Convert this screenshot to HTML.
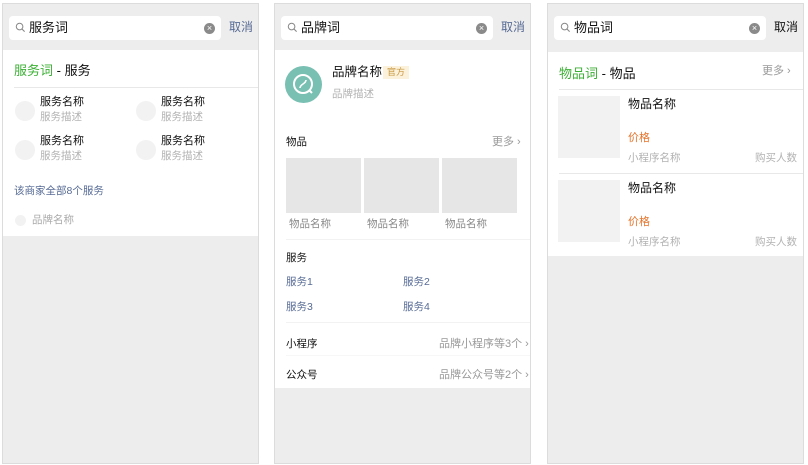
<!DOCTYPE html>
<html><head><meta charset="utf-8"><style>
*{margin:0;padding:0;box-sizing:border-box}
body{width:808px;height:465px;background:#fff;position:relative;font-family:"Liberation Sans","Noto Sans CJK SC",sans-serif;overflow:hidden;line-height:1}
.p{position:absolute;top:3px;width:257px;height:461px;background:#ededed;border:1px solid #dcdcdc}
.a{position:absolute;white-space:nowrap}
.sb{position:absolute;left:6px;top:12px;width:212px;height:24px;background:#fff;border-radius:4px}
.sb .t{position:absolute;left:20px;top:5px;font-size:13px;color:#111}
.x{position:absolute;right:6px;top:7px;width:11px;height:11px;border-radius:50%;background:#8a8a8a;color:#fff;font-size:9px;line-height:11px;text-align:center}
.c{position:absolute;left:226px;top:17px;font-size:12px;color:#576b95}
.w{position:absolute;left:0;width:255px;background:#fff}
.f13{font-size:13px;color:#111}
.f12{font-size:11px;color:#111}
.g{font-size:10.5px;color:#b2b2b2}
.ln{position:absolute;height:1px;background:#e8e8e8}
.circ{position:absolute;width:20px;height:20px;border-radius:50%;background:#f2f2f2}
.img{position:absolute;background:#e6e6e6}
.arr{font-size:11px;color:#999}
</style></head><body>
<svg width="0" height="0" style="position:absolute"><defs><symbol id="s" viewBox="0 0 12 12"><circle cx="5" cy="5" r="3.6" fill="none" stroke="#888" stroke-width="1.1"/><line x1="7.6" y1="7.6" x2="10.5" y2="10.5" stroke="#888" stroke-width="1.2"/></symbol></defs></svg>

<div class="p" style="left:2px">
 <div class="sb"><svg class="a" style="left:6px;top:6px" width="11" height="11"><use href="#s"/></svg><span class="t">服务词</span><span class="x">×</span></div>
 <span class="c">取消</span>
 <div class="w" style="top:46px;height:186px">
  <span class="a f13" style="left:11px;top:14px"><span style="color:#3cb035">服务词</span> - 服务</span>
  <div class="ln" style="left:11px;right:0;top:37px"></div>
  <div class="circ" style="left:12px;top:51px"></div><span class="a f12" style="left:37px;top:47px">服务名称</span><span class="a g" style="left:37px;top:62px">服务描述</span>
  <div class="circ" style="left:133px;top:51px"></div><span class="a f12" style="left:158px;top:47px">服务名称</span><span class="a g" style="left:158px;top:62px">服务描述</span>
  <div class="circ" style="left:12px;top:90px"></div><span class="a f12" style="left:37px;top:86px">服务名称</span><span class="a g" style="left:37px;top:101px">服务描述</span>
  <div class="circ" style="left:133px;top:90px"></div><span class="a f12" style="left:158px;top:86px">服务名称</span><span class="a g" style="left:158px;top:101px">服务描述</span>
  <span class="a" style="left:11px;top:136px;font-size:10.5px;color:#576b95">该商家全部8个服务</span>
  <div class="circ" style="left:12px;top:165px;width:11px;height:11px"></div><span class="a g" style="left:29px;top:165px;color:#aaa">品牌名称</span>
 </div>
</div>

<div class="p" style="left:274px">
 <div class="sb"><svg class="a" style="left:6px;top:6px" width="11" height="11"><use href="#s"/></svg><span class="t">品牌词</span><span class="x">×</span></div>
 <span class="c">取消</span>
 <div class="w" style="top:46px;height:338px">
  <div class="a" style="left:10px;top:16px;width:37px;height:37px;border-radius:50%;background:#79bfb2"><svg width="37" height="37"><circle cx="18" cy="18" r="9" fill="none" stroke="#fff" stroke-width="2"/><path d="M15 22c0-4 6-4 6-8" fill="none" stroke="#fff" stroke-width="1.6"/><line x1="24" y1="24" x2="27" y2="27" stroke="#fff" stroke-width="2"/></svg></div>
  <span class="a" style="left:57px;top:16px;font-size:12.5px;color:#111">品牌名称</span>
  <span class="a" style="left:108px;top:16px;font-size:9px;color:#c8963e;background:#fcf2dc;padding:2px 4px">官方</span>
  <span class="a g" style="left:57px;top:39px">品牌描述</span>
  <span class="a" style="left:11px;top:87px;font-size:10.5px;color:#111">物品</span>
  <span class="a arr" style="left:217px;top:87px">更多 ›</span>
  <div class="img" style="left:11px;top:108px;width:75px;height:55px"></div>
  <div class="img" style="left:89px;top:108px;width:75px;height:55px"></div>
  <div class="img" style="left:167px;top:108px;width:75px;height:55px"></div>
  <span class="a g" style="left:14px;top:169px;color:#888">物品名称</span>
  <span class="a g" style="left:92px;top:169px;color:#888">物品名称</span>
  <span class="a g" style="left:170px;top:169px;color:#888">物品名称</span>
  <div class="ln" style="left:11px;right:0;top:189px;background:#f2f2f2"></div>
  <span class="a" style="left:11px;top:203px;font-size:10.5px;color:#111">服务</span>
  <span class="a" style="left:11px;top:227px;font-size:10.5px;color:#576b95">服务1</span>
  <span class="a" style="left:128px;top:227px;font-size:10.5px;color:#576b95">服务2</span>
  <span class="a" style="left:11px;top:252px;font-size:10.5px;color:#576b95">服务3</span>
  <span class="a" style="left:128px;top:252px;font-size:10.5px;color:#576b95">服务4</span>
  <div class="ln" style="left:11px;right:0;top:272px;background:#f2f2f2"></div>
  <span class="a" style="left:11px;top:289px;font-size:10.5px;color:#111">小程序</span>
  <span class="a arr" style="left:164px;top:289px">品牌小程序等3个 ›</span>
  <div class="ln" style="left:11px;right:0;top:305px;background:#f7f7f7"></div>
  <span class="a" style="left:11px;top:320px;font-size:10.5px;color:#111">公众号</span>
  <span class="a arr" style="left:164px;top:320px">品牌公众号等2个 ›</span>
 </div>
</div>

<div class="p" style="left:547px">
 <div class="sb"><svg class="a" style="left:6px;top:6px" width="11" height="11"><use href="#s"/></svg><span class="t">物品词</span><span class="x">×</span></div>
 <span class="c" style="color:#111">取消</span>
 <div class="w" style="top:48px;height:204px">
  <span class="a f13" style="left:11px;top:15px"><span style="color:#3cb035">物品词</span> - 物品</span>
  <span class="a arr" style="left:214px;top:14px">更多 ›</span>
  <div class="ln" style="left:11px;right:0;top:37px"></div>
  <div class="img" style="left:10px;top:44px;width:62px;height:62px;background:#f2f2f2"></div>
  <span class="a f13" style="left:80px;top:46px;font-size:12px">物品名称</span>
  <span class="a" style="left:80px;top:81px;font-size:11px;color:#e5742b">价格</span>
  <span class="a g" style="left:80px;top:101px">小程序名称</span><span class="a g" style="left:207px;top:101px">购买人数</span>
  <div class="ln" style="left:11px;right:0;top:121px"></div>
  <div class="img" style="left:10px;top:128px;width:62px;height:62px;background:#f2f2f2"></div>
  <span class="a f13" style="left:80px;top:130px;font-size:12px">物品名称</span>
  <span class="a" style="left:80px;top:165px;font-size:11px;color:#e5742b">价格</span>
  <span class="a g" style="left:80px;top:185px">小程序名称</span><span class="a g" style="left:207px;top:185px">购买人数</span>
 </div>
</div>
</body></html>
